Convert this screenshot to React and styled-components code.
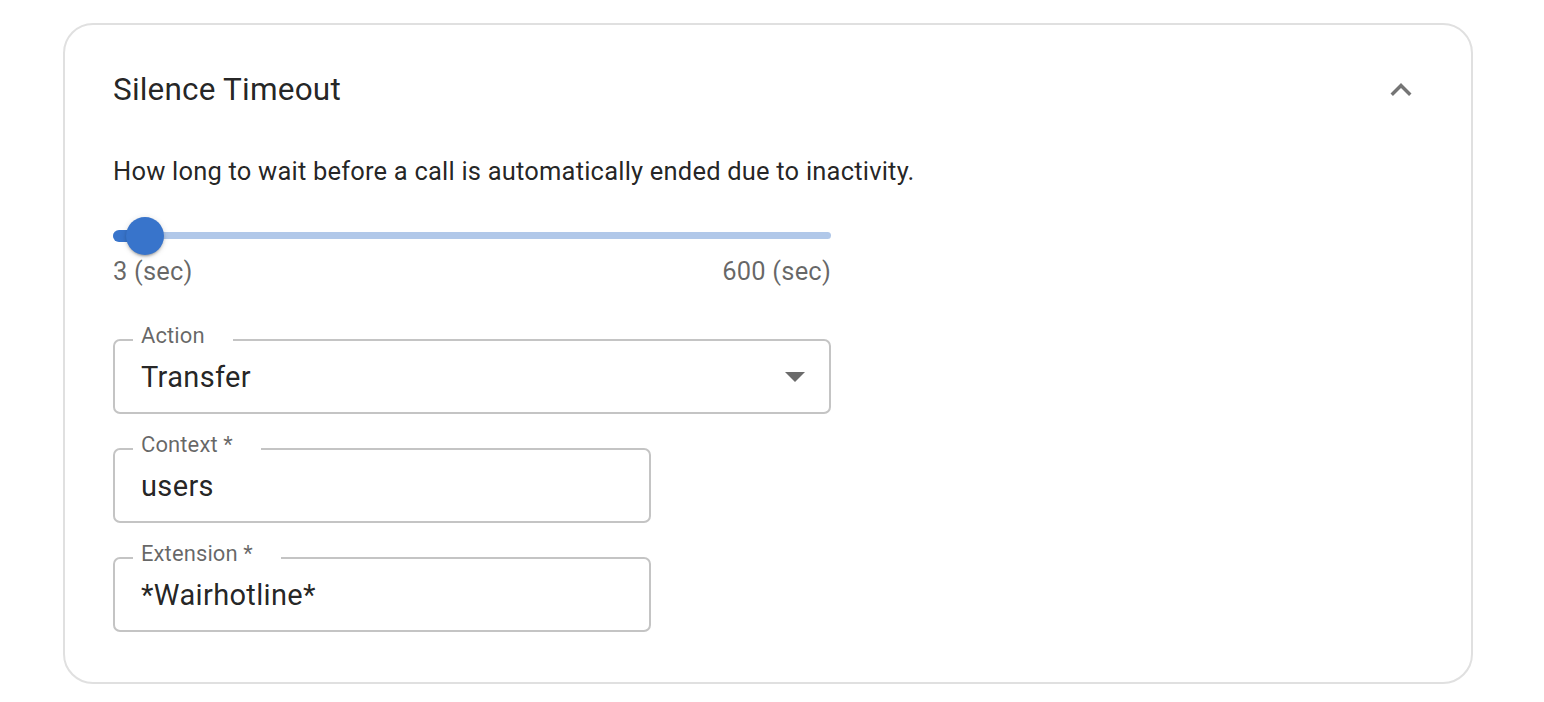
import React from "react";
import styled, { createGlobalStyle } from "styled-components";

const Global = createGlobalStyle`
  html, body { margin: 0; padding: 0; background: #ffffff; }
  body { font-family: Roboto, "Noto Sans", "Liberation Sans", sans-serif; color: rgba(0,0,0,0.87); }
  * { box-sizing: border-box; }
`;

const Page = styled.div`
  padding: 23px 0 0 63px;
`;

const Card = styled.section`
  width: 1410px;
  border: 2px solid #e0e0e0;
  border-radius: 30px;
  padding: 44px 49px 50px 48px;
  background: #fff;
`;

const Header = styled.div`
  display: flex;
  align-items: center;
  justify-content: space-between;
  height: 42px;
`;

const Title = styled.h2`
  margin: 0;
  font-size: 31.5px;
  font-weight: 400;
  letter-spacing: 0.2px;
  color: rgba(0,0,0,0.87);
  line-height: 42px;
`;

const IconButton = styled.button`
  border: none;
  background: none;
  padding: 0;
  width: 42px;
  height: 42px;
  display: flex;
  align-items: center;
  justify-content: center;
  color: #757575;
  cursor: pointer;
`;

const Body = styled.div`
  width: 718px;
  display: flex;
  flex-direction: column;
`;

const Description = styled.p`
  margin: 43px 0 0 0;
  font-size: 25.5px;
  letter-spacing: 0.2px;
  line-height: 35px;
  color: rgba(0,0,0,0.87);
  white-space: nowrap;
`;

const SliderRoot = styled.div`
  position: relative;
  height: 40px;
  margin-top: 26.5px;
  display: flex;
  align-items: center;
`;

const Rail = styled.div`
  position: relative;
  width: 100%;
  height: 7px;
  border-radius: 4px;
  background: #b1c8e9;
`;

const Track = styled.div`
  position: absolute;
  left: 0;
  top: 50%;
  height: 12px;
  transform: translateY(-50%);
  border-radius: 6px;
  background: #3874cb;
`;

const Thumb = styled.div`
  position: absolute;
  top: 50%;
  width: 38px;
  height: 38px;
  border-radius: 50%;
  background: #3874cb;
  transform: translate(-50%, -50%);
  box-shadow: 0 3px 2px -2px rgba(0,0,0,0.2), 0 2px 3px 0 rgba(0,0,0,0.14), 0 1px 6px 0 rgba(0,0,0,0.12);
`;

const SliderLabels = styled.div`
  display: flex;
  justify-content: space-between;
  font-size: 25.5px;
  letter-spacing: 0.2px;
  line-height: 30px;
  color: rgba(0,0,0,0.6);
`;

const Fields = styled.div`
  margin-top: 39px;
  display: flex;
  flex-direction: column;
  gap: 19.5px;
`;

const Fieldset = styled.fieldset`
  margin: 0;
  min-width: 0;
  width: ${(p) => p.$width}px;
  padding: 0 18px 14.5px 18px;
  border: 2px solid #c4c4c4;
  border-radius: 7px;
`;

const Legend = styled.legend`
  padding: 0 28px 10px 8px;
  font-size: 22px;
  letter-spacing: 0.1px;
  line-height: 21px;
  color: rgba(0,0,0,0.6);
  background: #fff;
`;

const ValueRow = styled.div`
  display: flex;
  align-items: center;
  justify-content: space-between;
  height: 42px;
  padding-left: 8px;
  font-size: 29px;
  letter-spacing: 0.35px;
  line-height: 42px;
  color: rgba(0,0,0,0.87);
`;

const Arrow = styled.svg`
  margin-right: 6px;
  flex: none;
`;

function Field({ label, value, width, select }) {
  return (
    <Fieldset $width={width}>
      <Legend>{label}</Legend>
      <ValueRow>
        <span>{value}</span>
        {select && (
          <Arrow width="20" height="10" viewBox="0 0 20 10">
            <path d="M0 0 L20 0 L10 10 Z" fill="#6b6b6b" />
          </Arrow>
        )}
      </ValueRow>
    </Fieldset>
  );
}

function Slider({ min, max, value }) {
  const pct = ((value - min) / (max - min)) * 100;
  return (
    <SliderRoot>
      <Rail>
        <Track style={{ width: `${pct}%` }} />
        <Thumb style={{ left: `${pct}%` }} />
      </Rail>
    </SliderRoot>
  );
}

export default function App() {
  return (
    <Page>
      <Global />
      <Card>
        <Header>
          <Title>Silence Timeout</Title>
          <IconButton aria-label="collapse">
            <svg width="42" height="42" viewBox="0 0 24 24" fill="currentColor">
              <path d="M12 8l-6 6 1.41 1.41L12 10.83l4.59 4.58L18 14z" />
            </svg>
          </IconButton>
        </Header>
        <Body>
          <Description>
            How long to wait before a call is automatically ended due to inactivity.
          </Description>
          <Slider min={3} max={600} value={29.7} />
          <SliderLabels>
            <span>3 (sec)</span>
            <span>600 (sec)</span>
          </SliderLabels>
          <Fields>
            <Field label="Action" value="Transfer" width={718} select />
            <Field label="Context *" value="users" width={538} />
            <Field label="Extension *" value="*Wairhotline*" width={538} />
          </Fields>
        </Body>
      </Card>
    </Page>
  );
}
